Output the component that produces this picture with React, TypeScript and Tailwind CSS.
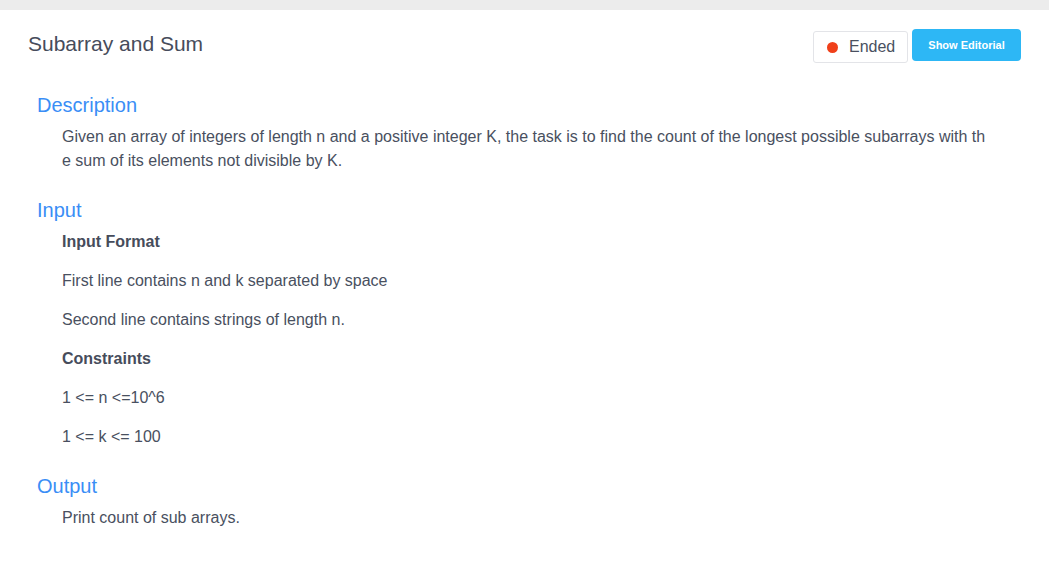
export default function App() {
  const inputItems = [
    { text: "Input Format", bold: true },
    { text: "First line contains n and k separated by space" },
    { text: "Second line contains strings of length n." },
    { text: "Constraints", bold: true },
    { text: "1 <= n <=10^6" },
    { text: "1 <= k <= 100" },
  ];

  return (
    <div className="min-h-[574px] bg-white font-['Liberation_Sans',Arial,sans-serif] text-[#495060]">
      <div className="h-[10px] bg-[#ececec]" />

      <div className="flex justify-between items-start pl-[28px] pr-[28px] pt-[19px]">
        <h1 className="text-[21px] leading-[30px] text-[#464c5b]">Subarray and Sum</h1>
        <div className="flex items-start gap-[4px]">
          <div className="mt-[2px] h-[32px] w-[95px] flex items-center gap-[11px] pl-[13px] border border-[#e3e4e8] rounded-[3px] bg-white">
            <span className="w-[11px] h-[11px] rounded-full bg-[#f0401a]" />
            <span className="text-[16px] text-[#495060]">Ended</span>
          </div>
          <button className="h-[32px] w-[109px] rounded-[4px] bg-[#2db7f5] text-white text-[11px] font-bold">
            Show Editorial
          </button>
        </div>
      </div>

      <div className="pl-[37px]">
        <h2 className="mt-[28px] text-[20px] leading-[28px] text-[#3a8ef6]">Description</h2>
        <p className="mt-[6px] ml-[25px] w-[926px] text-[16px] leading-[24px] break-all">
          Given an array of integers of length n and a positive integer K, the task is to find the count of the longest possible subarrays with the sum of its elements not divisible by K.
        </p>

        <h2 className="mt-[23px] text-[20px] leading-[28px] text-[#3a8ef6]">Input</h2>
        <div className="mt-[6px] ml-[25px] flex flex-col gap-[15px]">
          {inputItems.map((item) => (
            <p
              key={item.text}
              className={`text-[16px] leading-[24px] ${item.bold ? "font-bold text-[#464c5b]" : ""}`}
            >
              {item.text}
            </p>
          ))}
        </div>

        <h2 className="mt-[23px] text-[20px] leading-[28px] text-[#3a8ef6]">Output</h2>
        <p className="mt-[6px] ml-[25px] text-[16px] leading-[24px]">Print count of sub arrays.</p>
      </div>
    </div>
  );
}
